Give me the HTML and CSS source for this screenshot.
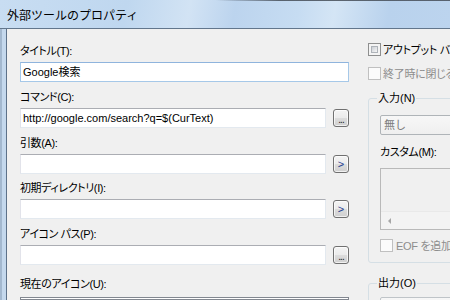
FILE: index.html
```html
<!DOCTYPE html>
<html lang="ja">
<head>
<meta charset="utf-8">
<title>外部ツールのプロパティ</title>
<link rel="stylesheet" href="styles.css">
</head>
<body>
<div class="window">
  <div class="titlebar"><span class="title">外部ツールのプロパティ</span></div>
  <div class="frame">
    <div class="frame-left"></div>
    <div class="client">
      <div class="col-left">
        <div class="field">
          <div class="label">タイトル(T):</div>
          <div class="field-row"><div class="input wide focus">Google検索</div></div>
        </div>
        <div class="field">
          <div class="label">コマンド(C):</div>
          <div class="field-row"><div class="input">http://google.com/search?q=$(CurText)</div><div class="btn dots">...</div></div>
        </div>
        <div class="field tight">
          <div class="label">引数(A):</div>
          <div class="field-row"><div class="input"></div><div class="btn arrow">&gt;</div></div>
        </div>
        <div class="field">
          <div class="label">初期ディレクトリ(I):</div>
          <div class="field-row"><div class="input"></div><div class="btn arrow">&gt;</div></div>
        </div>
        <div class="field last">
          <div class="label">アイコン パス(P):</div>
          <div class="field-row"><div class="input"></div><div class="btn dots">...</div></div>
        </div>
        <div class="label icon-label">現在のアイコン(U):</div>
        <div class="icon-box"></div>
      </div>
      <div class="col-right">
        <div class="check"><span class="box"></span><span class="check-text">アウトプット バー</span></div>
        <div class="check disabled second"><span class="box"></span><span class="check-text">終了時に閉じる</span></div>
        <div class="group">
          <div class="group-title">入力(N)</div>
          <div class="combo">無し</div>
          <div class="label custom-label">カスタム(M):</div>
          <div class="textarea">
            <div class="textarea-body"></div>
            <div class="hscroll"><div class="scroll-btn"><span class="tri-left"></span></div></div>
          </div>
          <div class="check disabled eof"><span class="box"></span><span class="check-text">EOF を追加</span></div>
        </div>
        <div class="group out">
          <div class="group-title">出力(O)</div>
          <div class="combo out-combo"></div>
        </div>
      </div>
    </div>
  </div>
</div>
</body>
</html>
```
FILE: styles.css
```css
html, body {
  margin: 0;
  padding: 0;
}
body {
  width: 450px;
  height: 300px;
  overflow: hidden;
  font-family: "Liberation Sans", "Noto Sans CJK JP", sans-serif;
  color: #000;
  background: #f0f0f0;
}
.window {
  display: flex;
  flex-direction: column;
  width: 450px;
  height: 300px;
}
.titlebar {
  flex: none;
  height: 29px;
  box-sizing: border-box;
  padding: 2px 0 0 7px;
  border-bottom: 1px solid #62768c;
  display: flex;
  align-items: center;
  background:
    linear-gradient(to right, rgba(70,78,88,0) 48%, rgba(70,78,88,0.85) 62%) top / 100% 1px no-repeat,
    linear-gradient(100deg, #c8ddf2 0%, #bfd7ef 28%, #d2e3f4 42%, #bcd4ee 52%, #c6dcf2 66%, #d4e5f5 74%, #b9d2ed 86%, #bcd4ee 100%);
}
.title {
  font-family: "Noto Sans CJK JP", sans-serif;
  font-size: 12px;
  line-height: 16px;
  white-space: nowrap;
}
.frame {
  flex: 1;
  display: flex;
  min-height: 0;
}
.frame-left {
  flex: none;
  width: 6px;
  border-right: 1px solid #5d7189;
  background: linear-gradient(to right, #a3b8cf 0, #a3b8cf 2px, #c4d8ed 2px, #c4d8ed 100%);
}
.client {
  flex: 1;
  display: flex;
  padding: 14px 0 0 13px;
  background: #f0f0f0;
  min-width: 0;
}
.col-left {
  flex: none;
  width: 329px;
  display: flex;
  flex-direction: column;
}
.label {
  font-size: 11px;
  line-height: 16px;
  height: 16px;
  white-space: nowrap;
  font-feature-settings: "palt";
  letter-spacing: -0.4px;
}
.field .label {
  margin-bottom: 3px;
}
.field {
  margin-bottom: 7px;
}
.field.tight {
  margin-bottom: 6px;
}
.field.last {
  margin-bottom: 11px;
}
.field-row {
  display: flex;
  align-items: center;
  gap: 7px;
  height: 20px;
}
.input {
  flex: none;
  width: 306px;
  height: 20px;
  box-sizing: border-box;
  border: 1px solid;
  border-color: #abadb3 #e3e9ef #e3e9ef #e2e3ea;
  background: #fff;
  font-size: 11px;
  line-height: 18px;
  padding-left: 2px;
  white-space: nowrap;
  overflow: hidden;
}
.input.wide {
  width: 329px;
}
.input.focus {
  border-color: #8fb4dd #a6c8e8 #a6c8e8 #a6c8e8;
}
.btn {
  flex: none;
  width: 16px;
  height: 18px;
  box-sizing: border-box;
  border: 1px solid #707070;
  border-radius: 3px;
  background: linear-gradient(#f4f4f4 0%, #ebebeb 50%, #dddddd 50%, #cfcfcf 100%);
  box-shadow: inset 0 0 0 1px rgba(255,255,255,0.7);
  display: flex;
  justify-content: center;
  font-family: "Liberation Sans", sans-serif;
  color: #1a1a1a;
}
.btn.dots {
  font-size: 10px;
  line-height: 18px;
  align-items: flex-start;
  padding-top: 1px;
  letter-spacing: -1px;
}
.btn.arrow {
  font-size: 11px;
  line-height: 15px;
  align-items: center;
  color: #1f3f8f;
}
.icon-label {
  margin-bottom: 5px;
}
.icon-box {
  height: 40px;
  box-sizing: border-box;
  border: 1px solid #828790;
  background: #fff;
}
.col-right {
  flex: none;
  width: 200px;
  margin-left: 19px;
  display: flex;
  flex-direction: column;
}
.check {
  display: flex;
  align-items: flex-start;
  height: 14px;
  gap: 2px;
  font-size: 11px;
  line-height: 14px;
  white-space: nowrap;
  font-feature-settings: "palt";
  letter-spacing: -0.3px;
}
.check.second {
  margin-top: 10px;
}
.box {
  flex: none;
  width: 13px;
  height: 13px;
  box-sizing: border-box;
  border: 1px solid #8e8f8f;
  background: #f4f4f4;
  padding: 2px;
  display: flex;
}
.box::after {
  content: "";
  flex: 1;
  border: 1px solid #aeb3b9;
  background: linear-gradient(135deg, #cbcfd5, #f6f6f6);
}
.check.disabled {
  color: #8d8d8d;
}
.check.disabled .box {
  border-color: #c0c0c0;
  background: #fbfbfb;
}
.check.disabled .box::after {
  border: none;
  background: #fbfbfb;
}
.group {
  margin-top: 17px;
  border: 1px solid #d5dfe5;
  border-radius: 3px;
  padding: 0 0 9px 11px;
  display: flex;
  flex-direction: column;
}
.group.out {
  margin-top: 20px;
  padding-bottom: 20px;
}
.group-title {
  width: fit-content;
  margin: -9px 0 0 -3px;
  padding: 0 1px;
  background: #f0f0f0;
  font-size: 11px;
  line-height: 16px;
  white-space: nowrap;
}
.combo {
  margin-top: 9px;
  height: 20px;
  box-sizing: border-box;
  border: 1px solid #afb4b8;
  border-radius: 2px;
  background: linear-gradient(#f7f7f7, #efefef);
  color: #7a7a7a;
  font-size: 11px;
  line-height: 18px;
  padding-left: 3px;
}
.out-combo {
  margin-top: 6px;
  border-color: #bfc4c8;
}
.custom-label {
  margin-top: 9px;
}
.textarea {
  margin-top: 8px;
  height: 62px;
  box-sizing: border-box;
  border: 1px solid #b9b9b9;
  background: #f0f0f0;
  display: flex;
  flex-direction: column;
}
.textarea-body {
  flex: 1;
}
.hscroll {
  height: 17px;
  flex: none;
  border-top: 1px solid #e9e9e9;
  background: #f3f3f3;
  display: flex;
}
.scroll-btn {
  width: 17px;
  display: flex;
  align-items: center;
  justify-content: center;
}
.tri-left {
  width: 0;
  height: 0;
  border-top: 3px solid transparent;
  border-bottom: 3px solid transparent;
  border-right: 3px solid #a6a6a6;
}
.check.eof {
  margin-top: 9px;
  gap: 3px;
}
```
